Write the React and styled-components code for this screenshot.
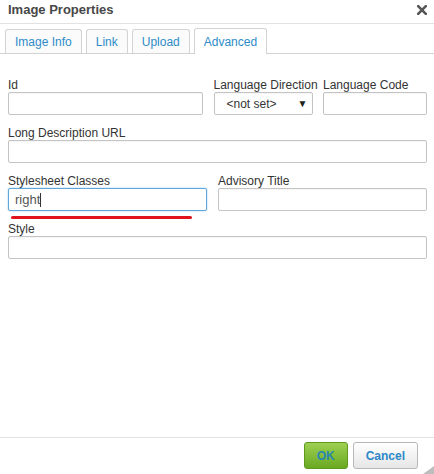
import React from "react";
import styled, { createGlobalStyle } from "styled-components";

const GlobalStyle = createGlobalStyle`
  html, body {
    margin: 0;
    padding: 0;
    background: #fff;
  }
  body {
    font-family: "Liberation Sans", Arial, sans-serif;
    font-size: 12px;
    color: #333;
  }
`;

const Dialog = styled.div`
  position: relative;
  width: 434px;
  height: 474px;
  display: flex;
  flex-direction: column;
  background: #fff;
  overflow: hidden;
`;

const TitleBar = styled.div`
  box-sizing: border-box;
  height: 24px;
  padding: 2px 7px 0 8px;
  display: flex;
  align-items: flex-start;
  justify-content: space-between;
  border-bottom: 1px solid #e2e2e2;
`;

const Title = styled.div`
  font-size: 13px;
  font-weight: bold;
  line-height: 15px;
  color: #474747;
`;

const Close = styled.svg`
  margin-top: 3px;
  display: block;
`;

const TabStrip = styled.div`
  box-sizing: border-box;
  height: 30px;
  padding: 0 5px;
  display: flex;
  align-items: flex-end;
  gap: 4px;
  border-bottom: 1px solid #d3d3d3;
`;

const Tab = styled.div`
  box-sizing: border-box;
  height: ${(p) => (p.$active ? 26 : 24)}px;
  margin-bottom: ${(p) => (p.$active ? -1 : 0)}px;
  padding: 0 9px;
  display: flex;
  align-items: center;
  border: 1px solid #d3d3d3;
  border-bottom: none;
  border-radius: 3px 3px 0 0;
  background: ${(p) => (p.$active ? "#fff" : "#fbfbfb")};
  color: #2e8bc8;
  font-size: 12px;
`;

const Body = styled.div`
  flex: 1;
  padding: 24px 7px 0 8px;
  display: flex;
  flex-direction: column;
  gap: 11px;
`;

const Row = styled.div`
  display: grid;
  grid-template-columns: ${(p) => p.$cols};
  column-gap: ${(p) => p.$gap || 0}px;
`;

const Field = styled.div`
  position: relative;
  display: flex;
  flex-direction: column;
  min-width: 0;
`;

const Label = styled.div`
  height: 14px;
  line-height: 14px;
  white-space: nowrap;
  color: #333;
`;

const TextBox = styled.div`
  box-sizing: border-box;
  height: 23px;
  padding: 0 6px;
  display: flex;
  align-items: center;
  border: 1px solid ${(p) => (p.$focused ? "#5ea6dc" : "#c4c4c4")};
  border-radius: 2px;
  background: #fff;
  box-shadow: ${(p) =>
    p.$focused
      ? "0 0 2px rgba(94, 166, 220, 0.6)"
      : "inset 0 1px 1px rgba(0, 0, 0, 0.04)"};
  color: #555;
  font-size: 13px;
`;

const Caret = styled.span`
  display: inline-block;
  width: 1px;
  height: 14px;
  background: #333;
`;

const SelectBox = styled(TextBox)`
  justify-content: space-between;
  padding: 0 4px 0 12px;
  color: #333;
  font-size: 12px;
`;

const Arrow = styled.span`
  font-size: 10px;
  color: #222;
`;

const Underline = styled.div`
  position: absolute;
  left: 3px;
  top: 42px;
  width: 181px;
  height: 3px;
  border-radius: 2px;
  background: #e0141c;
`;

const Footer = styled.div`
  box-sizing: border-box;
  height: 37px;
  padding: 4px 16px 0 0;
  display: flex;
  justify-content: flex-end;
  align-items: flex-start;
  gap: 5px;
  border-top: 1px solid #e2e2e2;
`;

const Button = styled.button`
  height: 27px;
  padding: 0 12px;
  border-radius: 3px;
  font-family: "Liberation Sans", Arial, sans-serif;
  font-size: 12px;
  font-weight: bold;
  cursor: pointer;
  border: 1px solid ${(p) => (p.$primary ? "#5d9a1d" : "#b8b8b8")};
  background: ${(p) =>
    p.$primary
      ? "linear-gradient(#9dd052, #6aa821)"
      : "linear-gradient(#ffffff, #e6e6e6)"};
  color: ${(p) => (p.$primary ? "#2886b0" : "#2d89c9")};
`;

const Grip = styled.svg`
  position: absolute;
  right: 0;
  bottom: 0;
  display: block;
`;

export default function App() {
  return (
    <Dialog>
      <GlobalStyle />
      <TitleBar>
        <Title>Image Properties</Title>
        <Close width="10" height="10" viewBox="0 0 10 10">
          <path
            d="M1.2 1.2 L8.8 8.8 M8.8 1.2 L1.2 8.8"
            stroke="#555"
            strokeWidth="2.6"
            strokeLinecap="square"
          />
        </Close>
      </TitleBar>
      <TabStrip>
        <Tab>Image Info</Tab>
        <Tab>Link</Tab>
        <Tab>Upload</Tab>
        <Tab $active>Advanced</Tab>
      </TabStrip>
      <Body>
        <Row $cols="195px 99px 104px" $gap={10.5}>
          <Field>
            <Label>Id</Label>
            <TextBox />
          </Field>
          <Field>
            <Label>Language Direction</Label>
            <SelectBox>
              <span>&lt;not set&gt;</span>
              <Arrow>▼</Arrow>
            </SelectBox>
          </Field>
          <Field>
            <Label>Language Code</Label>
            <TextBox />
          </Field>
        </Row>
        <Row $cols="1fr">
          <Field>
            <Label>Long Description URL</Label>
            <TextBox />
          </Field>
        </Row>
        <Row $cols="199px 209px" $gap={11}>
          <Field>
            <Label>Stylesheet Classes</Label>
            <TextBox $focused>
              right
              <Caret />
            </TextBox>
            <Underline />
          </Field>
          <Field>
            <Label>Advisory Title</Label>
            <TextBox />
          </Field>
        </Row>
        <Row $cols="1fr">
          <Field>
            <Label>Style</Label>
            <TextBox />
          </Field>
        </Row>
      </Body>
      <Footer>
        <Button $primary>OK</Button>
        <Button>Cancel</Button>
      </Footer>
      <Grip width="11" height="8" viewBox="0 0 11 8">
        <polygon points="11,0 11,8 0,8" fill="#bdbdbd" />
      </Grip>
    </Dialog>
  );
}
